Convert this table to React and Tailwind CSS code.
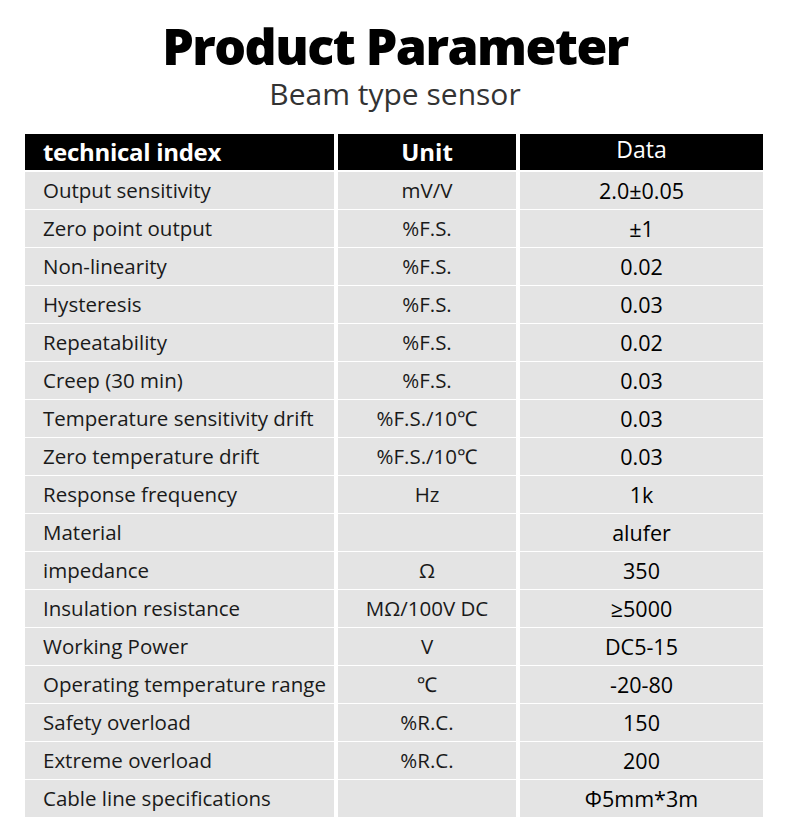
const rows = [
  ["Output sensitivity", "mV/V", "2.0±0.05"],
  ["Zero point output", "%F.S.", "±1"],
  ["Non-linearity", "%F.S.", "0.02"],
  ["Hysteresis", "%F.S.", "0.03"],
  ["Repeatability", "%F.S.", "0.02"],
  ["Creep (30 min)", "%F.S.", "0.03"],
  ["Temperature sensitivity drift", "%F.S./10℃", "0.03"],
  ["Zero temperature drift", "%F.S./10℃", "0.03"],
  ["Response frequency", "Hz", "1k"],
  ["Material", "", "alufer"],
  ["impedance", "Ω", "350"],
  ["Insulation resistance", "MΩ/100V DC", "≥5000"],
  ["Working Power", "V", "DC5-15"],
  ["Operating temperature range", "℃", "-20-80"],
  ["Safety overload", "%R.C.", "150"],
  ["Extreme overload", "%R.C.", "200"],
  ["Cable line specifications", "", "Φ5mm*3m"],
];

export default function App() {
  return (
    <div className="w-[790px] h-[837px] bg-white overflow-hidden" style={{ fontFamily: '"Open Sans", "Noto Sans", sans-serif' }}>
      <div className="pt-[18px] flex flex-col items-center">
        <h1 className="text-[50px] leading-[56px] font-extrabold text-black tracking-[-1.5px]">Product Parameter</h1>
        <p className="text-[30px] leading-[40px] text-[#333]">Beam type sensor</p>
      </div>
      <div className="mt-[20px] ml-[25px] w-[738px] flex flex-col gap-[4px]">
        <div className="grid grid-cols-[309px_178px_243px] gap-x-[4px] h-[34px]">
          <div className="bg-black text-white font-bold text-[24px] leading-[36px] pl-[18px] tracking-[-0.3px]">technical index</div>
          <div className="bg-black text-white font-bold text-[24px] leading-[36px] text-center">Unit</div>
          <div className="bg-black text-white text-[23px] leading-[31px] text-center">Data</div>
        </div>
        {rows.map((r, i) => (
          <div key={i} className="grid grid-cols-[309px_178px_243px] gap-x-[4px] h-[34px] text-[20.5px] leading-[37px] text-[#1a1a1a]">
            <div className="bg-[#e4e4e4] pl-[18px] whitespace-nowrap">{r[0]}</div>
            <div className="bg-[#e4e4e4] text-center whitespace-nowrap">{r[1]}</div>
            <div className="bg-[#e4e4e4] text-center text-[21.5px] text-black whitespace-nowrap">{r[2]}</div>
          </div>
        ))}
      </div>
    </div>
  );
}
